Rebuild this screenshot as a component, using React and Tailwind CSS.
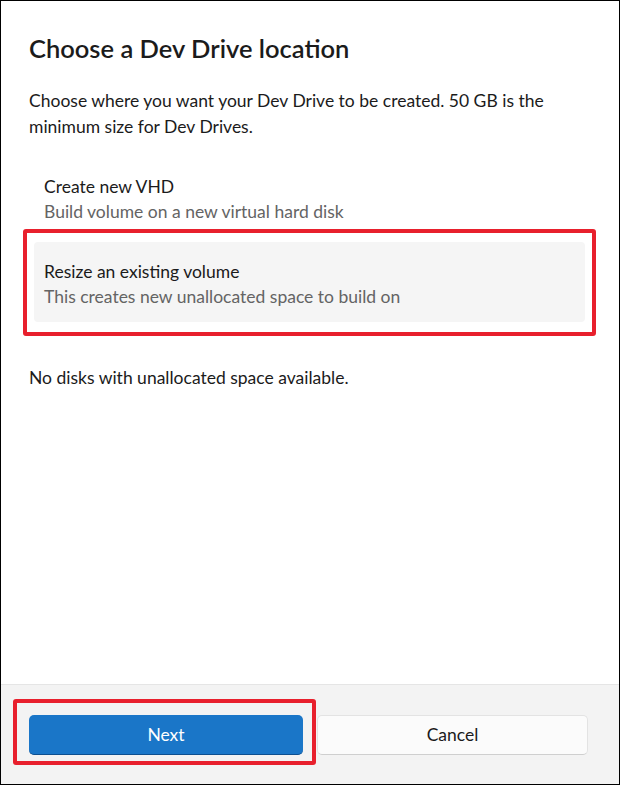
import React from "react";

function Option({ title, subtitle, selected, marked }) {
  return (
    <div className="relative">
      <div
        className={`h-[80px] px-[10px] flex flex-col justify-center rounded-[4px] ${
          selected ? "bg-[#f5f5f5] pt-[4px]" : "bg-white pb-[2px]"
        }`}
      >
        <div className="text-[17.5px] leading-[25px] text-[#1b1b1b]">{title}</div>
        <div className="text-[17.5px] leading-[25px] text-[#646464]">{subtitle}</div>
      </div>
      {marked && (
        <div className="absolute left-[-11px] right-[-11px] top-[-13px] bottom-[-14px] border-[4px] border-[#e8202d] rounded-[3px] pointer-events-none" />
      )}
    </div>
  );
}

export default function App() {
  return (
    <div
      className="w-[620px] h-[785px] bg-white border border-black flex flex-col overflow-hidden"
      style={{ fontFamily: "Lato, 'Noto Sans', sans-serif" }}
    >
      <div className="flex-1 pl-[28px] pr-[34px] pt-[31px]">
        <h1 className="text-[25.5px] leading-[32px] font-semibold text-[#1b1b1b]">
          Choose a Dev Drive location
        </h1>

        <p className="mt-[24px] text-[17.5px] leading-[26px] text-[#1b1b1b] whitespace-nowrap">
          Choose where you want your Dev Drive to be created. 50 GB is the
          <br />
          minimum size for Dev Drives.
        </p>

        <div className="mt-[20px] ml-[5px] flex flex-col gap-[2px]">
          <Option title="Create new VHD" subtitle="Build volume on a new virtual hard disk" />
          <Option
            title="Resize an existing volume"
            subtitle="This creates new unallocated space to build on"
            selected
            marked
          />
        </div>

        <p className="mt-[43px] text-[17.5px] leading-[26px] text-[#1b1b1b]">
          No disks with unallocated space available.
        </p>
      </div>

      <div className="h-[100px] bg-[#f3f3f3] border-t border-[#e5e5e5] flex items-center gap-[14px] pl-[28px]">
        <div className="relative">
          <button className="w-[274px] h-[40px] pt-[2px] rounded-[5px] bg-[#1a76c8] border-b border-[#0e4f8f] text-white text-[17.5px]">
            Next
          </button>
          <div className="absolute left-[-16px] right-[-13px] top-[-16px] bottom-[-10px] border-[4px] border-[#e8202d] rounded-[3px] pointer-events-none" />
        </div>
        <button className="w-[271px] h-[40px] pt-[2px] rounded-[5px] bg-[#fbfbfb] border border-[#e3e3e3] border-b-[#cfcfcf] text-[#1b1b1b] text-[17.5px]">
          Cancel
        </button>
      </div>
    </div>
  );
}
